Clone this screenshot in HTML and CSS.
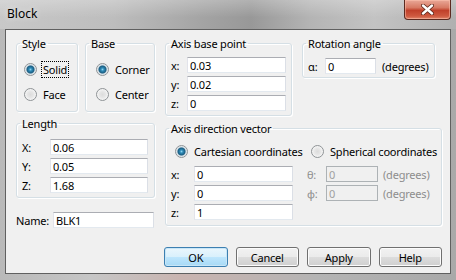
FILE: index.html
```html
<!DOCTYPE html>
<html lang="en">
<head>
    <meta charset="UTF-8">
    <title>Block</title>
    <link rel="stylesheet" href="styles.css">
</head>
<body>
    <div class="window">
        <div class="titlebar">
            <span class="title">Block</span>
            <div class="close">
                <svg width="13" height="11" viewBox="0 0 13 11">
                    <path d="M2 1.5 L11 9.5 M11 1.5 L2 9.5" stroke="#5a2418" stroke-width="4" stroke-linecap="round"/>
                    <path d="M2 1.5 L11 9.5 M11 1.5 L2 9.5" stroke="#fff" stroke-width="2.4" stroke-linecap="round"/>
                </svg>
            </div>
        </div>
        <div class="client">
            <div class="main">
                <div class="col-left">
                    <div class="group-row">
                        <fieldset class="group g-style">
                            <legend>Style</legend>
                            <div class="inner">
                                <label class="radio-row"><input type="radio" name="style" class="radio" checked><span class="focus">Solid</span></label>
                                <label class="radio-row"><input type="radio" name="style" class="radio"><span>Face</span></label>
                            </div>
                        </fieldset>
                        <fieldset class="group g-base">
                            <legend>Base</legend>
                            <div class="inner">
                                <label class="radio-row"><input type="radio" name="base" class="radio" checked><span>Corner</span></label>
                                <label class="radio-row"><input type="radio" name="base" class="radio"><span>Center</span></label>
                            </div>
                        </fieldset>
                    </div>
                    <fieldset class="group g-length">
                        <legend>Length</legend>
                        <div class="inner">
                            <div class="field"><span class="lbl w28">X:</span><input class="text w98" value="0.06"></div>
                            <div class="field"><span class="lbl w28">Y:</span><input class="text w98" value="0.05"></div>
                            <div class="field"><span class="lbl w28">Z:</span><input class="text w98" value="1.68"></div>
                        </div>
                    </fieldset>
                    <div class="field name-row"><span class="lbl w37">Name:</span><input class="text w101" value="BLK1"></div>
                </div>
                <div class="col-right">
                    <div class="group-row">
                        <fieldset class="group g-point">
                            <legend>Axis base point</legend>
                            <div class="inner">
                                <div class="field"><span class="lbl w16">x:</span><input class="text w99" value="0.03"></div>
                                <div class="field"><span class="lbl w16">y:</span><input class="text w99" value="0.02"></div>
                                <div class="field"><span class="lbl w16">z:</span><input class="text w99" value="0"></div>
                            </div>
                        </fieldset>
                        <fieldset class="group g-rotation">
                            <legend>Rotation angle</legend>
                            <div class="inner">
                                <div class="field"><span class="lbl w17">α:</span><input class="text w51" value="0"><span class="unit">(degrees)</span></div>
                            </div>
                        </fieldset>
                    </div>
                    <fieldset class="group g-dir">
                        <legend>Axis direction vector</legend>
                        <div class="inner">
                            <div class="radio-line">
                                <label class="radio-row cart"><input type="radio" name="coord" class="radio" checked><span>Cartesian coordinates</span></label>
                                <label class="radio-row"><input type="radio" name="coord" class="radio"><span>Spherical coordinates</span></label>
                            </div>
                            <div class="field"><span class="lbl w23">x:</span><input class="text w99" value="0"><span class="lbl dis w19 sp">θ:</span><input class="text w52" value="0" disabled><span class="unit dis">(degrees)</span></div>
                            <div class="field"><span class="lbl w23">y:</span><input class="text w99" value="0"><span class="lbl dis w19 sp">φ:</span><input class="text w52" value="0" disabled><span class="unit dis">(degrees)</span></div>
                            <div class="field"><span class="lbl w23">z:</span><input class="text w99" value="1"></div>
                        </div>
                    </fieldset>
                </div>
            </div>
            <div class="buttons">
                <button class="btn default">OK</button>
                <button class="btn">Cancel</button>
                <button class="btn">Apply</button>
                <button class="btn">Help</button>
            </div>
        </div>
    </div>
</body>
</html>
```

FILE: styles.css
```css
body {
    margin: 0;
    font-family: "Noto Sans", "Open Sans", sans-serif;
    font-size: 11px;
    letter-spacing: -0.2px;
    color: #000;
    overflow: hidden;
}

.window {
    width: 456px;
    height: 280px;
    display: flex;
    flex-direction: column;
    background: linear-gradient(90deg, #b9b9b9 0%, #c6c6c6 20%, #c9b4b0 40%, #b4b4b4 70%, #a9a9a9 100%);
    box-sizing: border-box;
    padding: 0 5px 6px 5px;
}

.titlebar {
    height: 29px;
    margin: 0 -5px;
    display: flex;
    justify-content: space-between;
    align-items: flex-start;
    background:
        linear-gradient(180deg, rgba(255,255,255,0.25) 0%, rgba(255,255,255,0) 60%),
        linear-gradient(90deg, #c8c8c8 0%, #bdbdbd 25%, #a3a3a3 45%, #989898 55%, #b4b4b4 68%, #c3c3c3 82%, #b0b0b0 100%);
}

.title {
    padding: 6px 0 0 7px;
    font-size: 12px;
    line-height: 16px;
    letter-spacing: 0;
    text-shadow: 0 0 6px rgba(255,255,255,0.8);
}

.close {
    width: 45px;
    height: 19px;
    margin-right: 5px;
    display: flex;
    align-items: center;
    justify-content: center;
    border: 1px solid #5b2a20;
    border-top: none;
    border-radius: 0 0 4px 4px;
    background: linear-gradient(180deg, #e9a898 0%, #d77a64 40%, #c0402a 55%, #cf5a40 85%, #e0876c 100%);
    box-shadow: inset 0 0 0 1px rgba(255,200,180,0.5);
}

.client {
    flex: 1;
    background: #f0f0f0;
    border: 1px solid #606060;
    padding: 6px 8px 0 10px;
    display: flex;
    flex-direction: column;
}

.main {
    display: flex;
    gap: 10px;
}

.col-left {
    width: 139px;
    display: flex;
    flex-direction: column;
}

.col-right {
    width: 277px;
    display: flex;
    flex-direction: column;
}

.group-row {
    display: flex;
}

.group {
    margin: 0;
    padding: 0;
    min-width: 0;
    box-sizing: border-box;
    border: 1px solid #d5dfe5;
    border-radius: 3px;
    box-shadow: inset 1px 1px 0 #fff, 1px 1px 0 #fff;
}

.group legend {
    padding: 0 2px;
    margin-left: 3px;
    line-height: 15px;
}

.g-style { width: 62px; padding: 6px 0 4px; }
.g-style .inner { padding-left: 7px; }
.g-base { width: 70px; padding: 6px 0 4px; margin-left: 7px; }
.g-base .inner { padding-left: 10px; }
.g-length { width: 139px; margin-top: 4px; padding: 8px 0 4px; }
.g-length .inner { padding-left: 5px; }
.g-point { width: 127px; padding: 6px 0 4px; }
.g-point .inner { padding-left: 5px; }
.g-rotation { width: 133px; padding: 7px 0 3px; margin-left: 10px; align-self: flex-start; }
.g-rotation .inner { padding-left: 5px; }
.g-dir { width: 277px; margin-top: 5px; padding: 3px 0 5px; }
.g-dir .inner { padding-left: 5px; }

.radio-row {
    height: 25px;
    display: flex;
    align-items: center;
}

.radio-row span {
    margin-left: 6px;
    line-height: 15px;
    white-space: nowrap;
}

.radio-row .focus {
    outline: 1px dotted #000;
    outline-offset: 0;
    padding: 0 1px;
    margin-left: 5px;
}

.radio {
    appearance: none;
    -webkit-appearance: none;
    width: 13px;
    height: 13px;
    margin: 0;
    flex: none;
    border: 1px solid #8f9396;
    border-radius: 50%;
    background: radial-gradient(circle, #dcdcdc 0, #e6e6e6 3px, #f2f2f2 5px, #fafafa 6px);
    box-sizing: border-box;
}

.radio:checked {
    background: radial-gradient(circle, #8fd3ef 0, #2f8cb8 1.5px, #1a5d82 3.5px, #cfdbe2 4.5px, #f7f7f7 6px);
}

.radio-line {
    display: flex;
    height: 24px;
    align-items: center;
    padding-left: 4px;
    margin-bottom: 3px;
}

.radio-line .cart {
    width: 136px;
}

.field {
    display: flex;
    align-items: center;
    height: 16px;
    margin-bottom: 3px;
}

.field:last-child {
    margin-bottom: 0;
}

.lbl {
    flex: none;
    line-height: 15px;
}

.w16 { width: 16px; }
.w17 { width: 17px; }
.w19 { width: 19px; }
.w23 { width: 23px; }
.w28 { width: 28px; }
.w37 { width: 37px; }

.sp { margin-left: 14px; }

.text {
    height: 16px;
    box-sizing: border-box;
    border: 1px solid #abadb3;
    border-color: #abadb3 #dbdfe6 #e3e9ef #e2e3ea;
    padding: 0 2px;
    margin: 0;
    font: inherit;
    letter-spacing: inherit;
    color: #000;
    background: #fff;
    outline: none;
}

.text:disabled {
    background: #f0f0f0;
    border-color: #adb2b5;
    color: #a0a0a0;
}

.w51 { width: 51px; }
.w52 { width: 52px; }
.w98 { width: 98px; }
.w99 { width: 99px; }
.w101 { width: 101px; }

.unit {
    margin-left: 6px;
}

.unit.dis {
    margin-left: 5px;
}

.dis {
    color: #8d8d8d;
}

.name-row {
    margin-top: 14px;
}

.buttons {
    display: flex;
    gap: 8px;
    margin: 19px 0 0 148px;
}

.btn {
    width: 64px;
    height: 20px;
    padding: 0;
    font: inherit;
    letter-spacing: inherit;
    color: #000;
    border: 1px solid #707070;
    border-radius: 3px;
    background: linear-gradient(180deg, #f2f2f2 0%, #ebebeb 49%, #dddddd 50%, #cfcfcf 100%);
    box-shadow: inset 0 0 0 1px #fcfcfc;
}

.btn.default {
    border-color: #3c7fb1;
    background: linear-gradient(180deg, #eaf6fd 0%, #d9f0fc 49%, #bee6fd 50%, #a7d9f5 100%);
    box-shadow: inset 0 0 0 1px #c8e6f7;
}
```
